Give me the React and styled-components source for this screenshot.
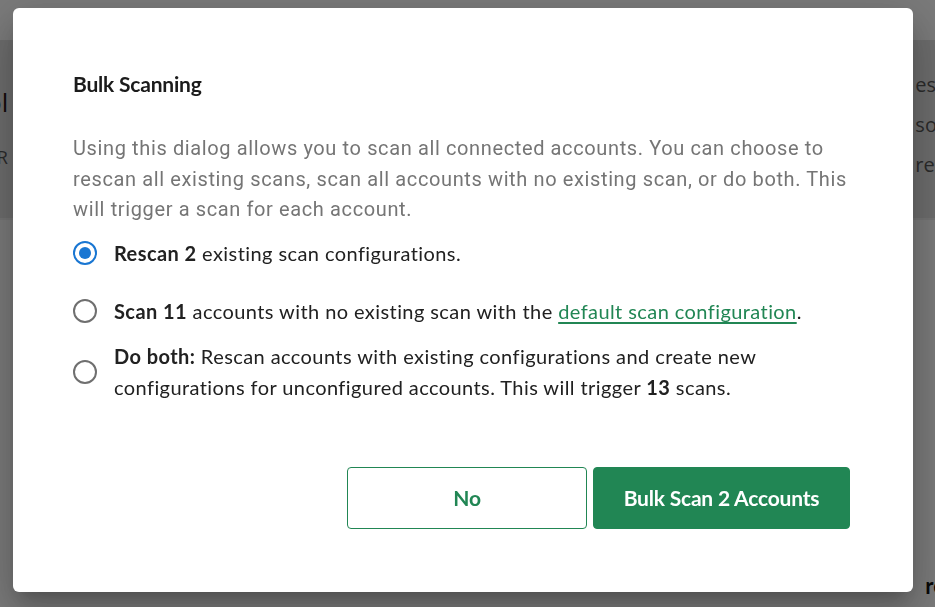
import React from "react";
import styled, { createGlobalStyle } from "styled-components";

const Global = createGlobalStyle`
  html, body { margin: 0; padding: 0; }
  body { width: 935px; height: 607px; overflow: hidden; background: #f4f4f4; font-family: Lato, "Open Sans", sans-serif; }
`;

const Page = styled.div`
  width: 935px;
  height: 607px;
  display: flex;
  flex-direction: column;
  background: #f4f4f4;
  overflow: hidden;
`;

const TopBar = styled.div`
  height: 40px;
  background: #f4f4f4;
`;

const Band = styled.div`
  height: 178px;
  background: #d9d9d9;
  display: flex;
  justify-content: space-between;
  border-bottom: 2px solid #e8e8e8;
`;

const BgCol = styled.div`
  display: flex;
  flex-direction: column;
  padding-top: ${(p) => p.$top}px;
  gap: ${(p) => p.$gap}px;
  margin: 0 ${(p) => p.$mr || 0}px 0 ${(p) => p.$ml || 0}px;
  font-family: "Open Sans", sans-serif;
  font-size: ${(p) => p.$size}px;
  color: #555;
`;

const BgTitle = styled.span`
  color: #2a1515;
  font-size: 26px;
  line-height: 28px;
`;

const BgText = styled.span`
  line-height: 22px;
`;

const Rest = styled.div`
  flex: 1;
  display: flex;
  justify-content: flex-end;
  align-items: flex-end;
  padding-bottom: 8px;
  margin-right: -10px;
`;

const BgBold = styled.span`
  font-family: Lato, sans-serif;
  font-weight: 700;
  font-size: 22px;
  color: #111;
`;

const Overlay = styled.div`
  position: fixed;
  inset: 0;
  background: rgba(0, 0, 0, 0.5);
`;

const Modal = styled.div`
  position: fixed;
  left: 13px;
  top: 8px;
  width: 900px;
  height: 584px;
  box-sizing: border-box;
  background: #fff;
  border-radius: 6px;
  box-shadow: 0 11px 15px -7px rgba(0,0,0,0.2), 0 24px 38px 3px rgba(0,0,0,0.14), 0 9px 46px 8px rgba(0,0,0,0.12);
  padding: 64px 63px 0 60px;
  display: flex;
  flex-direction: column;
`;

const Title = styled.h2`
  margin: 0;
  font-family: Lato, sans-serif;
  font-weight: 700;
  font-size: 21px;
  line-height: 24px;
  color: #1b1b1b;
  letter-spacing: -0.2px;
`;

const Description = styled.p`
  margin: 37px 0 0 0;
  font-family: Roboto, sans-serif;
  font-size: 20px;
  letter-spacing: 0.62px;
  line-height: 30.5px;
  color: #757575;
`;

const Options = styled.div`
  display: flex;
  flex-direction: column;
  margin-top: ${(p) => p.$top}px;
`;

const Option = styled.label`
  display: flex;
  align-items: center;
  gap: 17px;
  margin-top: ${(p) => p.$mt || 0}px;
  font-family: Lato, sans-serif;
  font-size: 20px;
  letter-spacing: 0.42px;
  line-height: 31px;
  color: #212121;
  cursor: pointer;
`;

const Radio = styled.span`
  flex: none;
  width: 24px;
  height: 24px;
  box-sizing: border-box;
  border-radius: 50%;
  border: 2px solid ${(p) => (p.$checked ? "#1976d2" : "#6f6f6f")};
  display: flex;
  align-items: center;
  justify-content: center;
  &::after {
    content: "";
    width: 12px;
    height: 12px;
    border-radius: 50%;
    background: #1976d2;
    display: ${(p) => (p.$checked ? "block" : "none")};
  }
`;

const OptionText = styled.span`
  b { font-weight: 700; }
`;

const Link = styled.a`
  color: #218654;
  text-decoration: underline;
  text-decoration-skip-ink: none;
  text-underline-offset: 3px;
`;

const Actions = styled.div`
  margin-top: 64px;
  display: flex;
  justify-content: flex-end;
  gap: 6px;
`;

const Button = styled.button`
  height: 62px;
  width: ${(p) => p.$w}px;
  box-sizing: border-box;
  border-radius: 4px;
  font-family: Lato, sans-serif;
  font-weight: 700;
  font-size: 21px;
  letter-spacing: -0.2px;
  border: 1px solid #218654;
  background: ${(p) => (p.$primary ? "#218654" : "#fff")};
  color: ${(p) => (p.$primary ? "#fff" : "#218654")};
  cursor: pointer;
`;

export default function App() {
  return (
    <>
      <Global />
      <Page>
        <TopBar />
        <Band>
          <BgCol $top={48} $gap={30} $size={18} $ml={-14}>
            <BgTitle>ol</BgTitle>
            <BgText>oR</BgText>
          </BgCol>
          <BgCol $top={34} $gap={18} $size={20} $mr={-12}>
            <BgText>esc</BgText>
            <BgText>sol</BgText>
            <BgText>red</BgText>
          </BgCol>
        </Band>
        <Rest>
          <BgBold>re</BgBold>
        </Rest>
      </Page>
      <Overlay />
      <Modal role="dialog">
        <Title>Bulk Scanning</Title>
        <Description>
          Using this dialog allows you to scan all connected accounts. You can choose to rescan all
          existing scans, scan all accounts with no existing scan, or do both. This will trigger a
          scan for each account.
        </Description>
        <Options $top={13}>
          <Option>
            <Radio $checked />
            <OptionText>
              <b>Rescan 2</b> existing scan configurations.
            </OptionText>
          </Option>
          <Option $mt={27}>
            <Radio />
            <OptionText>
              <b>Scan 11</b> accounts with no existing scan with the{" "}
              <Link href="#">default scan configuration</Link>.
            </OptionText>
          </Option>
          <Option $mt={14}>
            <Radio />
            <OptionText>
              <b>Do both:</b> Rescan accounts with existing configurations and create new
              configurations for unconfigured accounts. This will trigger <b>13</b> scans.
            </OptionText>
          </Option>
        </Options>
        <Actions>
          <Button $w={240}>No</Button>
          <Button $primary $w={257}>Bulk Scan 2 Accounts</Button>
        </Actions>
      </Modal>
    </>
  );
}
